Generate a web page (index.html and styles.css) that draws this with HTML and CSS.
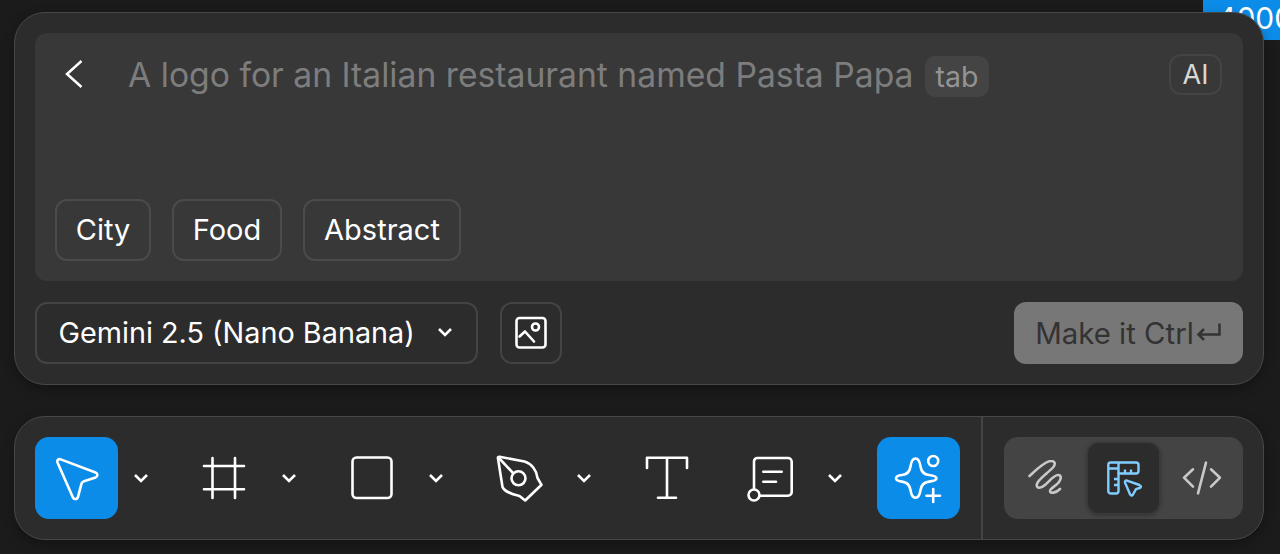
FILE: index.html
```html
<!DOCTYPE html>
<html lang="en">

<head>
    <meta charset="UTF-8">
    <title>Make Image</title>
    <link rel="stylesheet" href="styles.css">
</head>

<body>
    <div class="size-badge">4000</div>

    <!-- Prompt panel -->
    <div class="panel prompt-panel">
        <div class="prompt-box">
            <div class="prompt-top">
                <svg class="back-icon" width="24" height="32" viewBox="0 0 24 32">
                    <path d="M18.5 3 L4 16 L18.5 29" />
                </svg>
                <span class="prompt-text">A logo for an Italian restaurant named Pasta Papa</span>
                <span class="tab-key">tab</span>
                <span class="ai-tag">AI</span>
            </div>
            <div class="chips">
                <button class="chip">City</button>
                <button class="chip">Food</button>
                <button class="chip">Abstract</button>
            </div>
        </div>
        <div class="prompt-actions">
            <button class="model-select">
                <span>Gemini 2.5 (Nano Banana)</span>
                <svg class="chevron" width="16" height="10" viewBox="0 0 16 10">
                    <path d="M2 2 L8 8 L14 2" />
                </svg>
            </button>
            <button class="image-button">
                <svg class="icon" width="34" height="34" viewBox="0 0 34 34">
                    <rect x="2.5" y="2" width="29" height="29.5" rx="3" />
                    <circle cx="21.5" cy="11" r="3.5" />
                    <path d="M5.5 20.5 L11 15.5 L20 25.5" />
                </svg>
            </button>
            <button class="make-button">
                <span>Make it Ctrl</span>
                <svg class="return-icon" width="26" height="20" viewBox="0 0 26 20">
                    <path d="M23.5 0.5 V11.5 H3" />
                    <path d="M8 6 L2.5 11.5 L8 17" />
                </svg>
            </button>
        </div>
    </div>

    <!-- Toolbar -->
    <div class="panel toolbar">
        <div class="tools">
            <div class="tool-group">
                <button class="tool tool-active">
                    <svg class="icon" width="48" height="48" viewBox="0 0 48 48">
                        <path d="M4.5 8.5 C3.6 6 5.5 4.6 7.7 5.4 L42.5 18.5 C45 19.5 45 22.7 42.5 23.6 L31 27.2 C29.6 27.6 28.9 28.4 28.5 29.7 L25 42.8 C24.2 45.6 20.8 45.8 19.8 43.2 Z" />
                    </svg>
                </button>
                <svg class="chevron tool-chevron" width="16" height="10" viewBox="0 0 16 10"><path d="M2 2 L8 8 L14 2" /></svg>
            </div>
            <div class="tool-group">
                <button class="tool">
                    <svg class="icon" width="48" height="48" viewBox="0 0 48 48">
                        <path d="M12.5 4 V44 M35 4 V44 M4 12 H44 M4 35.3 H44" />
                    </svg>
                </button>
                <svg class="chevron tool-chevron" width="16" height="10" viewBox="0 0 16 10"><path d="M2 2 L8 8 L14 2" /></svg>
            </div>
            <div class="tool-group">
                <button class="tool">
                    <svg class="icon" width="48" height="48" viewBox="0 0 48 48">
                        <rect x="4.5" y="3.5" width="39" height="40.5" rx="4" />
                    </svg>
                </button>
                <svg class="chevron tool-chevron" width="16" height="10" viewBox="0 0 16 10"><path d="M2 2 L8 8 L14 2" /></svg>
            </div>
            <div class="tool-group">
                <button class="tool">
                    <svg class="icon" width="48" height="48" viewBox="0 0 48 48">
                        <path d="M2 4.5 C1.5 3.4 2.5 2.6 3.5 2.8 L28.5 7.5 C35.5 9.5 40.5 16 41.5 24 L45.5 30.8 L29.2 46.5 L23.5 42 C15.5 40 8.5 38 6.5 33 Z" />
                        <circle cx="22.5" cy="24.3" r="7" />
                        <path d="M2.5 3.5 L17 19" />
                    </svg>
                </button>
                <svg class="chevron tool-chevron" width="16" height="10" viewBox="0 0 16 10"><path d="M2 2 L8 8 L14 2" /></svg>
            </div>
            <button class="tool tool-text">
                <svg class="icon" width="48" height="48" viewBox="0 0 48 48">
                    <path d="M4 14 V3.7 H44 V14 M24 3.7 V43.7 M15 43.7 H33" />
                </svg>
            </button>
            <div class="tool-group">
                <button class="tool">
                    <svg class="icon" width="48" height="48" viewBox="0 0 48 48">
                        <path d="M8 35 V7.5 C8 5.2 9.5 4 11.5 4 H42 C44 4 45.7 5.5 45.7 8 V38 C45.7 40.2 44 41.7 42 41.7 H14" />
                        <circle cx="8" cy="41" r="5.5" />
                        <path d="M17.3 17.7 H35.7 M17.3 27.7 H30" />
                    </svg>
                </button>
                <svg class="chevron tool-chevron" width="16" height="10" viewBox="0 0 16 10"><path d="M2 2 L8 8 L14 2" /></svg>
            </div>
            <button class="tool tool-active tool-make">
                <svg class="icon" width="48" height="48" viewBox="0 0 48 48">
                    <path d="M20.5 4.5 C23.5 4.5 25 9 25.5 12.5 C26.3 17.8 29 20.5 34 21 C37.5 21.4 41.5 22 41.5 24.3 C41.5 26.6 37.5 27.2 34 27.6 C29 28.2 26.3 30.8 25.5 36 C25 39.5 23.5 43.7 20.5 43.7 C17.5 43.7 16 39.5 15.5 36 C14.7 30.8 12 28.2 7 27.6 C3.5 27.2 1 26.6 1 24.3 C1 22 3.5 21.4 7 21 C12 20.5 14.7 17.8 15.5 12.5 C16 9 17.5 4.5 20.5 4.5 Z" />
                    <circle cx="38.2" cy="7" r="5" />
                    <path d="M38.2 35 V48 M31.5 41.7 H45" />
                </svg>
            </button>
        </div>
        <div class="modes">
            <div class="mode-switch">
                <button class="mode">
                    <svg class="mode-icon" width="36" height="36" viewBox="0 0 36 36">
                        <path d="M1.5 16 C8 10 17 1 23 1 C27 1 28 4 25 7.5 C20 13 8.5 20 8.7 25 C9 29 13 28.5 17 25 C22 20.5 26 15 30 15 C33.5 15 33.5 18.5 31 22 C28 26 22 28.5 22 31 C22 34 28 33 32 29" />
                    </svg>
                </button>
                <button class="mode mode-active">
                    <svg class="ruler-icon" width="36" height="36" viewBox="0 0 36 36">
                        <path d="M4.5 2.5 H30 C31.5 2.5 32.5 3.5 32.5 5 V11 C32.5 12.5 31.5 13.5 30 13.5 H12.5 V31 C12.5 32.5 11.5 33.5 10 33.5 H4.5 C3 33.5 2.3 32.5 2.3 31 V5 C2.3 3.5 3 2.5 4.5 2.5 Z" />
                        <path d="M2.3 8.5 H12.5 M12.5 2.5 V13.5 M19 9.5 V13 M25 9.5 V13 M8 19 H12 M8 25 H12" />
                        <path d="M19 22.5 C18.6 21 19.6 20.2 21 20.7 L33.5 25 C35.5 25.8 35.3 27.4 33.5 28 L30 29.2 L27 34.5 C26 36 24.6 35.8 24 34.2 Z" />
                    </svg>
                </button>
                <button class="mode">
                    <svg class="mode-icon" width="40" height="40" viewBox="0 0 40 40">
                        <path d="M11 11.3 L2 19.7 L11 28.7 M24 4.7 L16 35.3 M29 11.3 L38 19.7 L29 28.7" />
                    </svg>
                </button>
            </div>
        </div>
    </div>
</body>

</html>
```

FILE: styles.css
```css
/* General */
html,
body {
    margin: 0;
    height: 554px;
    overflow: hidden;
}

body {
    box-sizing: border-box;
    padding: 12px 16px 0 14px;
    background-color: #1b1b1b;
    font-family: 'Inter', 'Liberation Sans', sans-serif;
    position: relative;
}

button {
    font-family: inherit;
    background: none;
    border: none;
    padding: 0;
    color: inherit;
}

/* Blue size label behind the panel */
.size-badge {
    position: absolute;
    top: 0;
    right: 0;
    width: 77px;
    height: 40px;
    box-sizing: border-box;
    padding-left: 14px;
    overflow: hidden;
    background-color: #0c8ce9;
    color: #fff;
    font-size: 30px;
    line-height: 36px;
    white-space: nowrap;
}

/* Panels */
.panel {
    position: relative;
    background-color: #2c2c2c;
    border: 1px solid #484848;
    border-radius: 31px;
    box-shadow: 0 4px 12px rgba(0, 0, 0, 0.3);
}

.prompt-panel {
    box-sizing: border-box;
    height: 373px;
    padding: 20px;
    display: flex;
    flex-direction: column;
    gap: 21px;
}

/* Prompt box */
.prompt-box {
    height: 248px;
    box-sizing: border-box;
    padding: 21px 21px 20px 20px;
    background-color: #383838;
    border-radius: 12px;
    display: flex;
    flex-direction: column;
    justify-content: space-between;
}

.prompt-top {
    display: flex;
    align-items: flex-start;
}

.back-icon {
    margin-top: 4px;
    margin-right: 41px;
    margin-left: 8px;
    fill: none;
    stroke: #fff;
    stroke-width: 2.5;
}

.prompt-text {
    color: #7d7d7d;
    font-size: 33.7px;
    line-height: 41px;
    white-space: nowrap;
}

.tab-key {
    margin-left: 11px;
    margin-top: 2px;
    padding: 0 11px;
    height: 41px;
    box-sizing: border-box;
    background-color: #444;
    border-radius: 10px;
    color: #939393;
    font-size: 28.5px;
    line-height: 41px;
}

.ai-tag {
    margin-left: auto;
    padding: 0 11.5px;
    height: 41px;
    box-sizing: border-box;
    border: 2px solid #444;
    border-radius: 12px;
    color: #d8d8d8;
    font-size: 27px;
    line-height: 37px;
}

.chips {
    display: flex;
    gap: 21px;
}

.chip {
    height: 62px;
    box-sizing: border-box;
    padding: 0 0 2px;
    width: 96px;
    border: 2px solid #4b4b4b;
    border-radius: 12px;
    color: #fff;
    font-size: 29px;
}

.chip:nth-child(2) {
    width: 110px;
}

.chip:nth-child(3) {
    width: 158px;
}

/* Actions under the prompt */
.prompt-actions {
    display: flex;
    height: 62px;
}

.model-select {
    width: 443px;
    box-sizing: border-box;
    padding: 0 23px 2px 21.5px;
    border: 2px solid #444;
    border-radius: 12px;
    color: #fff;
    font-size: 28.8px;
    display: flex;
    align-items: center;
    justify-content: space-between;
}

.image-button {
    width: 62px;
    margin-left: 22px;
    box-sizing: border-box;
    border: 2px solid #444;
    border-radius: 12px;
    display: flex;
    align-items: center;
    justify-content: center;
}

.make-button {
    width: 229px;
    margin-left: auto;
    background-color: #777;
    border-radius: 12px;
    color: #333;
    font-size: 29.4px;
    display: flex;
    align-items: center;
    justify-content: center;
    gap: 2px;
}

.return-icon {
    fill: none;
    stroke: #333;
    stroke-width: 2.5;
}

/* Icons */
.icon {
    fill: none;
    stroke: #fff;
    stroke-width: 2.6;
    stroke-linejoin: round;
    stroke-linecap: round;
    overflow: visible;
}

.chevron {
    fill: none;
    stroke: #fff;
    stroke-width: 2.6;
    flex-shrink: 0;
}

/* Toolbar */
.toolbar {
    margin-top: 31px;
    height: 124px;
    box-sizing: border-box;
    display: flex;
}

.tools {
    flex: 1;
    padding: 20px 21px 20px 20px;
    border-right: 2px solid #444;
    display: flex;
    gap: 18.7px;
}

.tool-group {
    display: flex;
    align-items: center;
}

.tool {
    width: 83px;
    height: 82px;
    border-radius: 14px;
    display: flex;
    align-items: center;
    justify-content: center;
}

.tool-active {
    background-color: #0c8ce9;
}

.tool-text {
    margin-right: 1.5px;
}

.tool-make {
    margin-left: auto;
}

.tool-chevron {
    margin: 0 15px;
}

.modes {
    padding: 20px;
    padding-left: 21px;
}

.mode-switch {
    width: 239px;
    height: 82px;
    box-sizing: border-box;
    background-color: #444;
    border-radius: 14px;
    display: flex;
    align-items: center;
}

.mode {
    flex: 1;
    height: 72px;
    display: flex;
    align-items: center;
    justify-content: center;
}

.mode-active {
    flex: 0 0 73px;
    box-sizing: border-box;
    background-color: #2c2c2c;
    border: 1px solid #3a3a3a;
    border-radius: 12px;
    box-shadow: 0 1px 4px rgba(0, 0, 0, 0.3);
}

.mode-icon {
    fill: none;
    stroke: #c8c8c8;
    stroke-width: 2.6;
    stroke-linecap: round;
    stroke-linejoin: round;
}

.ruler-icon {
    fill: none;
    stroke: #82cdff;
    stroke-width: 2.4;
    stroke-linejoin: round;
    overflow: visible;
}
```
